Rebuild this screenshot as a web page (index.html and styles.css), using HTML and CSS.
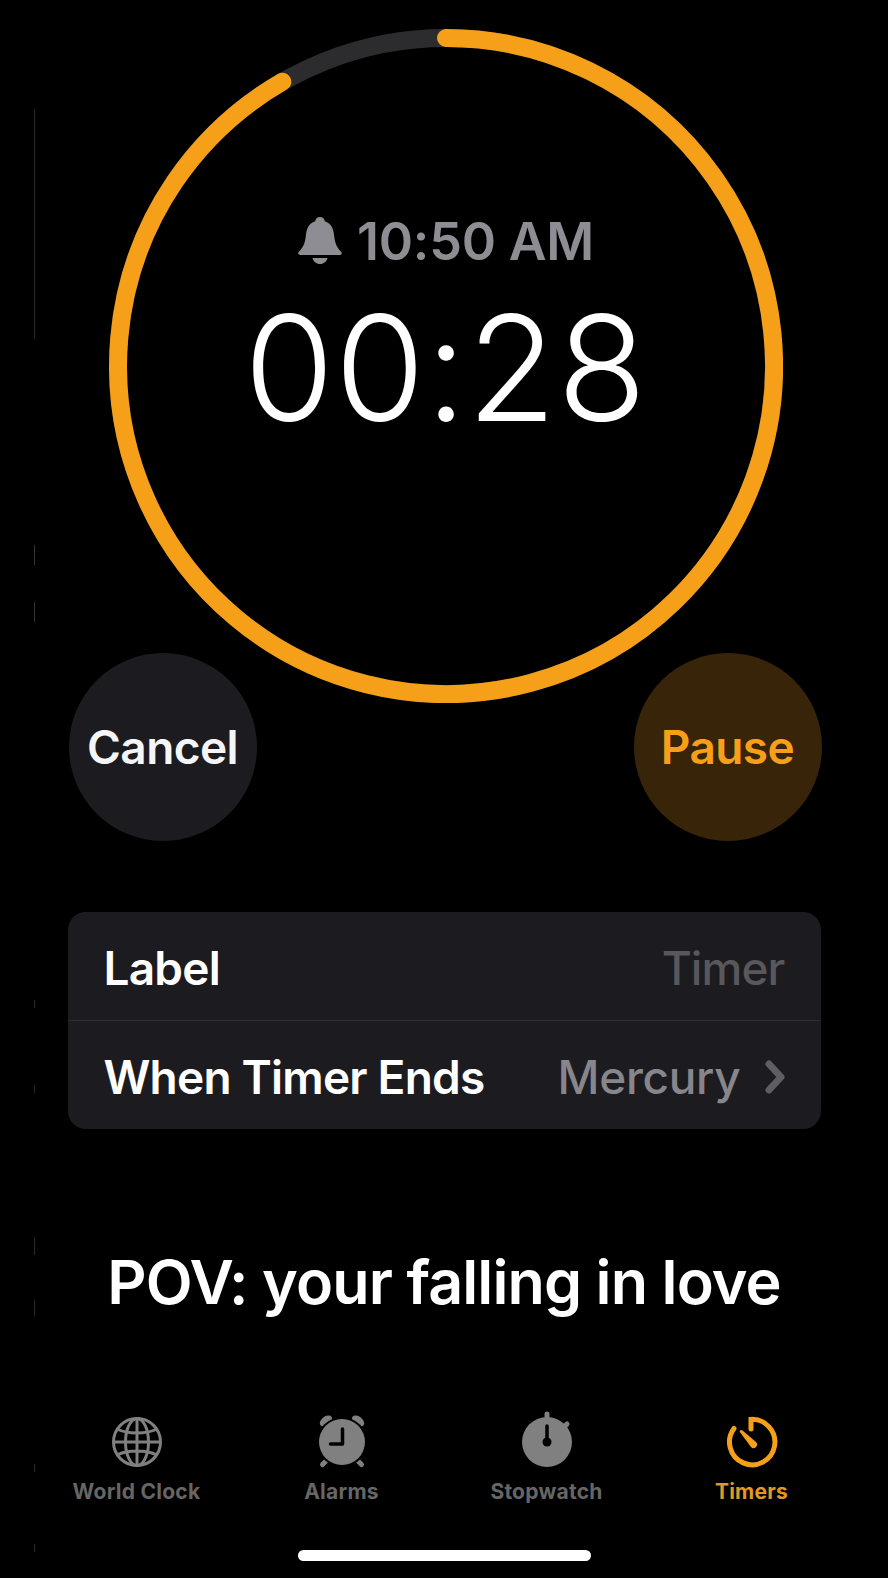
FILE: index.html
```html
<!DOCTYPE html>
<html lang="en">
<head>
    <meta charset="UTF-8">
    <meta name="viewport" content="width=device-width, initial-scale=1.0">
    <title>Timers</title>
    <link rel="stylesheet" href="styles.css">
</head>
<body>
    <div class="screen">
        <div class="edge-marks"></div>

        <div class="timer">
            <svg class="ring" viewBox="0 0 674 674" width="674" height="674">
                <circle class="ring-track" cx="337" cy="337" r="328"></circle>
                <path class="ring-progress" d="M337 9 A328 328 0 1 1 173.300 52.800"></path>
            </svg>
            <div class="timer-text">
                <div class="alarm-time">
                    <svg class="bell" viewBox="0 0 46 50" width="46" height="50">
                        <path d="M23 1c-3 0-4.500 2-4.800 4.300C11.500 7.300 9.500 13 8.800 20c-.7 7-2.500 11-6.500 15.300-1.700 1.800-1.300 3.700 1 3.700h39.400c2.300 0 2.700-1.900 1-3.700-4-4.300-5.800-8.300-6.500-15.300-.7-7-2.700-12.700-9.400-14.700C27.500 3 26 1 23 1z"></path>
                        <path d="M15.500 42h15c-.8 3.500-3.800 6-7.500 6s-6.700-2.500-7.500-6z"></path>
                    </svg>
                    <span>10:50 AM</span>
                </div>
                <div class="countdown">00:28</div>
            </div>
        </div>

        <div class="buttons">
            <div class="round-button cancel">Cancel</div>
            <div class="round-button pause">Pause</div>
        </div>

        <div class="card">
            <div class="card-row">
                <span class="row-title">Label</span>
                <span class="row-value dim">Timer</span>
            </div>
            <div class="card-row">
                <span class="row-title">When Timer Ends</span>
                <span class="row-value">Mercury
                    <svg class="chevron" viewBox="0 0 20 34" width="20" height="34">
                        <path d="M4 4l12 13L4 30"></path>
                    </svg>
                </span>
            </div>
        </div>

        <div class="caption">POV: your falling in love</div>

        <div class="tabs">
            <div class="tab">
                <svg class="tab-icon" viewBox="0 0 52 52" width="52" height="52">
                    <g class="globe">
                        <circle cx="26" cy="26" r="23.500"></circle>
                        <ellipse cx="26" cy="26" rx="11.500" ry="23.500"></ellipse>
                        <path d="M26 2.500v47M2.500 26h47M6 13c6 3 13 4 20 4s14-1 20-4M6 39c6-3 13-4 20-4s14 1 20 4"></path>
                    </g>
                </svg>
                <span>World Clock</span>
            </div>
            <div class="tab">
                <svg class="tab-icon" viewBox="0 0 52 52" width="52" height="52">
                    <ellipse class="fill" cx="10" cy="5" rx="7" ry="4.500" transform="rotate(-38 10 5)"></ellipse>
                    <ellipse class="fill" cx="42" cy="5" rx="7" ry="4.500" transform="rotate(38 42 5)"></ellipse>
                    <path class="cut" d="M6.500 48.500l4-4M45.500 48.500l-4-4"></path>
                    <circle class="gap" cx="26" cy="26" r="25"></circle>
                    <circle class="fill" cx="26" cy="26" r="23"></circle>
                    <path class="hands" d="M26.500 13v15h-12"></path>
                </svg>
                <span>Alarms</span>
            </div>
            <div class="tab">
                <svg class="tab-icon" viewBox="0 0 52 52" width="52" height="52">
                    <path class="cut" d="M26 -2v5M46 8l-4 4"></path>
                    <circle class="fill" cx="26" cy="26" r="25"></circle>
                    <path class="hands" d="M26 10v16"></path>
                    <circle class="dot" cx="26" cy="26" r="4.500"></circle>
                </svg>
                <span>Stopwatch</span>
            </div>
            <div class="tab active">
                <svg class="tab-icon" viewBox="0 0 52 52" width="52" height="52">
                    <path class="timer-ring" d="M25 13V3.400A22.700 22.700 0 1 1 8 12.500"></path>
                    <path class="needle" d="M13.500 15.500a2 2 0 0 1 3-1L30 26a3.500 3.500 0 0 1-5 5z"></path>
                </svg>
                <span>Timers</span>
            </div>
        </div>

        <div class="home-bar"></div>
    </div>
</body>
</html>
```

FILE: styles.css
```css
/* General Styles */
body {
    margin: 0;
    background-color: #000000;
    font-family: Inter, "Liberation Sans", sans-serif;
    color: #ffffff;
}

.screen {
    position: relative;
    width: 888px;
    height: 1578px;
    overflow: hidden;
    display: flex;
    flex-direction: column;
    align-items: center;
    padding-top: 29px;
    box-sizing: border-box;
}

/* Faint compression marks down the left edge */
.edge-marks {
    position: absolute;
    top: 0;
    left: 34px;
    width: 1px;
    height: 100%;
    background: linear-gradient(to bottom,
        transparent 109px, #2a2a2a 109px, #2a2a2a 339px, transparent 339px,
        transparent 545px, #333333 545px, #333333 565px, transparent 565px,
        transparent 602px, #333333 602px, #333333 622px, transparent 622px,
        transparent 1000px, #2a2a2a 1000px, #2a2a2a 1008px, transparent 1008px,
        transparent 1085px, #2a2a2a 1085px, #2a2a2a 1093px, transparent 1093px,
        transparent 1238px, #2a2a2a 1238px, #2a2a2a 1255px, transparent 1255px,
        transparent 1300px, #2a2a2a 1300px, #2a2a2a 1316px, transparent 1316px,
        transparent 1464px, #2a2a2a 1464px, #2a2a2a 1472px, transparent 1472px,
        transparent 1544px, #2a2a2a 1544px, #2a2a2a 1552px, transparent 1552px);
}

/* Timer ring */
.timer {
    position: relative;
    width: 674px;
    height: 674px;
    flex-shrink: 0;
    margin-left: 3px;
}

.ring {
    display: block;
}

.ring-track {
    fill: none;
    stroke: #2c2c2e;
    stroke-width: 18;
}

.ring-progress {
    fill: none;
    stroke: #f6a01a;
    stroke-width: 18;
    stroke-linecap: round;
}

.timer-text {
    position: absolute;
    top: 184px;
    left: 0;
    right: 0;
    display: flex;
    flex-direction: column;
    align-items: center;
}

.alarm-time {
    display: flex;
    align-items: center;
    gap: 14px;
    height: 56px;
    font-size: 52px;
    font-weight: 600;
    letter-spacing: -0.2px;
    color: #8e8d93;
}

.bell {
    fill: #8e8d93;
}

.countdown {
    font-size: 146px;
    font-weight: 300;
    line-height: 150px;
    letter-spacing: 0.5px;
    margin-top: 24px;
}

/* Cancel / Pause */
.buttons {
    width: 753px;
    display: flex;
    justify-content: space-between;
    margin-top: -50px;
    margin-left: 2px;
    flex-shrink: 0;
}

.round-button {
    width: 188px;
    height: 188px;
    border-radius: 50%;
    display: flex;
    align-items: center;
    justify-content: center;
    font-size: 46px;
    font-weight: 600;
    letter-spacing: -0.6px;
}

.cancel {
    background-color: #1c1b1f;
    color: #f5f5f7;
}

.pause {
    background-color: #372409;
    color: #f6a01a;
}

/* Label card */
.card {
    width: 753px;
    height: 217px;
    margin-top: 71px;
    background-color: #1c1b1f;
    border-radius: 18px;
    display: flex;
    flex-direction: column;
    flex-shrink: 0;
}

.card-row {
    flex: 1;
    display: flex;
    align-items: center;
    justify-content: space-between;
    padding: 3px 36px 0;
    font-size: 46px;
    letter-spacing: -0.3px;
}

.card-row + .card-row {
    border-top: 1px solid #2e2e31;
}

.row-title {
    font-weight: 600;
    letter-spacing: -0.8px;
}

.row-value {
    display: flex;
    align-items: center;
    gap: 24px;
    color: #87868c;
    font-weight: 500;
}

.dim {
    color: #58575c;
    letter-spacing: -0.9px;
}

.chevron {
    fill: none;
    stroke: #5f5e63;
    stroke-width: 7;
    stroke-linecap: round;
    stroke-linejoin: round;
}

.caption {
    margin-top: 116px;
    font-size: 61px;
    font-weight: 600;
    letter-spacing: -0.9px;
    line-height: 74px;
    flex-shrink: 0;
}

/* Tab bar */
.tabs {
    width: 820px;
    display: grid;
    grid-template-columns: repeat(4, 205px);
    margin-top: 97px;
    flex-shrink: 0;
}

.tab {
    display: flex;
    flex-direction: column;
    align-items: center;
    gap: 11px;
    font-size: 21px;
    font-weight: 700;
    letter-spacing: 0.25px;
    color: #666666;
}

.tab-icon {
    display: block;
    overflow: visible;
}

.globe {
    fill: none;
    stroke: #808080;
    stroke-width: 3;
}

.fill {
    fill: #808080;
}

.gap {
    fill: #000000;
}

.cut {
    fill: none;
    stroke: #808080;
    stroke-width: 5;
    stroke-linecap: round;
}

.hands {
    fill: none;
    stroke: #000000;
    stroke-width: 3.500;
    stroke-linecap: round;
    stroke-linejoin: round;
}

.dot {
    fill: #000000;
}

.active {
    color: #e09a24;
}

.timer-ring {
    fill: none;
    stroke: #f6a01a;
    stroke-width: 5;
    stroke-linecap: round;
}

.needle {
    fill: #f6a01a;
}

.home-bar {
    width: 293px;
    height: 11px;
    margin-top: 46px;
    background-color: #ffffff;
    border-radius: 6px;
    flex-shrink: 0;
}
```
